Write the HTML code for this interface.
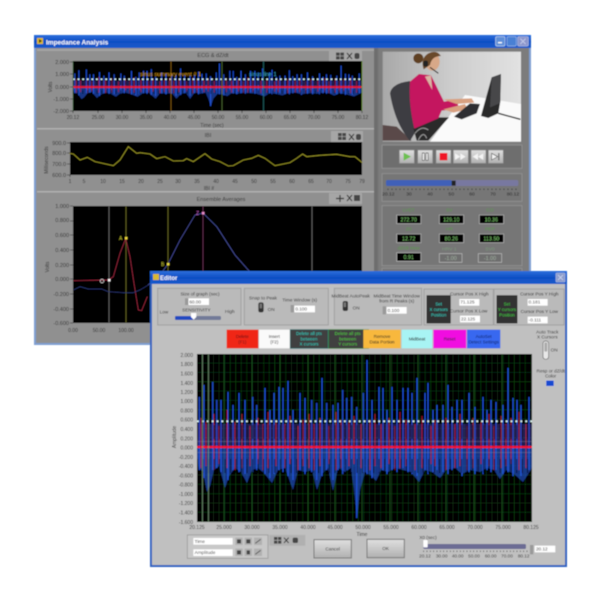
<!DOCTYPE html>
<html><head><meta charset="utf-8"><style>
html,body{margin:0;padding:0;background:#fff;width:600px;height:600px;overflow:hidden}
svg{display:block}
text{font-family:"Liberation Sans",sans-serif}
</style></head><body>
<svg width="600" height="600" viewBox="0 0 600 600" xmlns="http://www.w3.org/2000/svg">
<defs>
<filter id="b" x="-2%" y="-2%" width="104%" height="104%"><feGaussianBlur stdDeviation="0.4"/></filter>
<linearGradient id="tb" x1="0" y1="0" x2="0" y2="1"><stop offset="0" stop-color="#2d6fdc"/><stop offset=".5" stop-color="#0f4fc4"/><stop offset="1" stop-color="#1a5ccc"/></linearGradient>
<linearGradient id="wall" x1="0" y1="0" x2="1" y2="0"><stop offset="0" stop-color="#a8a8a8"/><stop offset=".5" stop-color="#cdcdcd"/><stop offset="1" stop-color="#e2e2e2"/></linearGradient>
<linearGradient id="btn" x1="0" y1="0" x2="0" y2="1"><stop offset="0" stop-color="#e0e0e0"/><stop offset="1" stop-color="#b0b0b0"/></linearGradient>
<g id="sp">
<path fill="none" stroke="#1f4fd8" stroke-width="1.200" d="M199.3 397V470M204 385V478M212.700 382V470M216.700 400V468M221 400V472M228 392V480M233 405V470M239 393V472M245 400V474M252.700 397V472M256.700 405V470M265 388V474M270 410V478M274 393V474M279 387V470M283 388V472M288 381V476M293 410V480M300 393V470M305 398V474M311.700 400V472M316.700 403V480M322 378V476M326.700 403V470M333 405V480M338 403V470M342.700 390V474M346.700 398V470M351.700 397V472M356.700 407V518M363.300 393V472M367 360V474M372 400V478M379 387V472M383 388V470M387 410V474M392 387V470M397 400V472M403 388V468M408 388V472M412 393V474M417 378V476M425 393V470M428 383V474M433 410V472M437 405V470M443 405V472M448 385V474M452 407V470M457 400V468M462 400V476M469 393V472M475 407V474M483 397V474M487 410V470M491 400V472M496 402V470M503 405V474M508 368V472M513 398V476M517 400V470M521 405V476M529 397V470"/>
<polygon fill="#2458dc" opacity=".6" points="197,446 532,446 532,468 523,482 514,474 506,470 500,479 494,470 487,468 480,472 470,470 462,474 455,468 446,470 440,478 432,472 425,470 419,482 411,472 403,470 395,468 388,472 381,470 376,481 372,476 365,472 360,490 357,518 354,490 351,468 345,472 338,468 333,491 328,468 322,474 317,490 312,470 305,472 298,470 293,490 285,468 278,470 272,483 264,473 258,468 252,470 247,483 241,472 235,468 229,476 225,488 219,466 214,470 210,486 207,492 203,472 199,468 197,460"/>
<rect x="197" y="424" width="335" height="24" fill="#4a3ab0" opacity=".45"/>
<path fill="none" stroke="#d0183c" stroke-width="1" opacity=".7" d="M201 418V468M206 422V466M214 414V470M219 426V464M227 410V468M235 422V470M242 414V468M250 426V466M258 418V464M263 424V470M268 412V468M276 420V466M285 424V468M290 416V464M298 426V470M303 420V466M309 414V468M314 424V470M320 418V466M329 426V464M336 412V470M341 420V468M349 422V466M354 416V464M361 424V468M370 420V470M375 414V466M381 424V468M389 418V464M395 426V470M400 412V468M406 420V466M415 424V470M422 416V468M431 426V464M435 420V466M446 418V470M455 424V468M460 414V466M467 426V470M473 418V468M481 422V464M489 414V466M494 426V470M501 416V468M506 424V466M511 418V464M519 412V470M526 424V468"/>
<path d="M197 466H532M197 432H532" stroke="#000" stroke-width="14" stroke-dasharray="1.200 4.300" opacity=".45" fill="none"/>
</g>
<pattern id="g1" x="197" y="354" width="5.57" height="9.33" patternUnits="userSpaceOnUse"><path d="M5.500 0V9.330M0 9.300H5.570" stroke="#17541f" stroke-width=".6" fill="none"/></pattern>
</defs>
<g filter="url(#b)">
<!-- main window -->
<rect x="34" y="35" width="497" height="310" fill="#7f9fd2"/>
<rect x="34" y="35" width="497" height="13" fill="url(#tb)" />
<rect x="36" y="48" width="493" height="295" fill="#909090"/>
<rect x="37" y="38" width="6" height="6" fill="#d8b830"/><path d="M39 39l3 2-3 2z" fill="#3a2a10"/>
<text x="46" y="44.500" font-size="6.500" font-weight="bold" fill="#fff">Impedance Analysis</text>
<g transform="translate(375 30) scale(.3333)">
<rect x="362" y="20" width="28" height="28" rx="4" fill="#5f8fd8" stroke="#c0d4f0" stroke-width="2"/>
<rect x="369" y="36" width="12" height="4" fill="#fff"/>
<rect x="396" y="20" width="28" height="28" rx="4" fill="#4a80d4" stroke="#9ab8e8" stroke-width="2"/>
<rect x="428" y="20" width="32" height="28" rx="4" fill="#8c96cc" stroke="#b0bce0" stroke-width="2"/>
<path d="M436 26l16 16M452 26l-16 16" stroke="#c0c8e8" stroke-width="3"/>
</g>
<rect x="37" y="49" width="339" height="2" fill="#a4a4a4"/>
<rect x="37" y="128" width="339" height="1.500" fill="#b0b0b0"/>
<rect x="37" y="191" width="339" height="1.500" fill="#b0b0b0"/>
<rect x="374" y="48" width="4" height="295" fill="#6e6e6e"/>
<rect x="378" y="48" width="151" height="295" fill="#7c7c7c"/>
<!-- Plot 1 -->
<text x="213" y="57" text-anchor="middle" font-size="5.500" fill="#333">ECG &amp; dZ/dt</text>
<rect x="329" y="50" width="33" height="11" fill="#a6a6a6"/>
<rect x="336" y="52.500" width="8" height="7" fill="#444"/><path d="M340 52v8M336 56h8" stroke="#ccc" stroke-width=".5"/>
<path d="M347 53l5 6M352 53l-5 6" stroke="#333" stroke-width="1"/>
<rect x="354.500" y="53" width="5" height="6" rx="2" fill="#444"/>
<rect x="73" y="61" width="289" height="50" fill="#000"/>
<use href="#sp" transform="translate(-97.150 -33.700) scale(.8627 .27)"/>
<path d="M73 87H362" stroke="#f0142c" stroke-width="1.800"/>
<path d="M73 79.300H362" stroke="#d8f8f4" stroke-width="1.500" stroke-dasharray="1.800 2.800"/>
<path d="M171 61V111" stroke="#9a6a10" stroke-width=".7"/><path d="M222 61V111" stroke="#5a7a3a" stroke-width=".7"/><path d="M263.500 61V111" stroke="#2a7a7a" stroke-width=".7"/><path d="M362 61V111" stroke="#6a9a30" stroke-width=".7"/><path d="M73 61V111" stroke="#3a6a3a" stroke-width=".6"/>
<text x="140" y="76" font-size="5.500" fill="#d89a18">sinus summary event # 1</text>
<text x="249" y="76" font-size="5.500" fill="#3aa8c8">sinus line 1</text>
<g font-size="5.500" fill="#333" text-anchor="end">
<text x="69" y="64">2.000</text><text x="69" y="76">1.000</text><text x="69" y="89">0.000</text><text x="69" y="101">-1.000</text><text x="69" y="113">-2.000</text>
</g>
<path d="M70 62h3M70 74h3M70 87h3M70 99h3M70 111h3M73 111v2M98 111v2M122 111v2M146 111v2M170 111v2M194 111v2M218 111v2M242 111v2M266 111v2M290 111v2M314 111v2M338 111v2M362 111v2" stroke="#222" stroke-width=".6"/>
<text x="52" y="87" font-size="5" fill="#333" transform="rotate(-90 52 87)" text-anchor="middle">Volts</text>
<g font-size="5" fill="#333" text-anchor="middle">
<text x="73" y="119">20.12</text><text x="98" y="119">25.00</text><text x="122" y="119">30.00</text><text x="146" y="119">35.00</text><text x="170" y="119">40.00</text><text x="194" y="119">45.00</text><text x="218" y="119">50.00</text><text x="242" y="119">55.00</text><text x="266" y="119">60.00</text><text x="290" y="119">65.00</text><text x="314" y="119">70.00</text><text x="338" y="119">75.00</text><text x="362" y="119">80.12</text>
<text x="212" y="127">Time (sec)</text>
</g>
<!-- Plot 2 -->
<text x="208" y="137" text-anchor="middle" font-size="5.500" fill="#333">IBI</text>
<rect x="331" y="131" width="32" height="11" fill="#a6a6a6"/>
<rect x="338" y="133" width="8" height="7" fill="#444"/><path d="M342 133v7M338 136.500h8" stroke="#ccc" stroke-width=".5"/>
<path d="M349 134l5 6M354 134l-5 6" stroke="#333" stroke-width="1"/>
<rect x="356" y="134" width="5" height="6" rx="2" fill="#444"/>
<rect x="70" y="142" width="292" height="33" fill="#000"/>
<g transform="translate(30 30) scale(.3333)">
<polyline fill="none" stroke="#a09c2a" stroke-width="2.500" points="118,370 130,372 150,390 172,382 195,395 250,407 270,390 295,350 320,370 330,368 360,372 380,386 405,380 430,393 460,392 470,386 490,395 525,371 545,387 570,395 595,408 610,407 640,390 665,385 685,376 705,385 735,407 780,398 800,385 818,372 830,380 870,376 920,373 960,380 975,380 997,398"/>
</g>
<g font-size="5.500" fill="#333" text-anchor="end">
<text x="66" y="145">900.0</text><text x="66" y="155">800.0</text><text x="66" y="166">700.0</text><text x="66" y="177">600.0</text>
</g>
<text x="48" y="160" font-size="5" fill="#333" transform="rotate(-90 48 160)" text-anchor="middle">Milliseconds</text>
<path d="M67 143h3M67 153h3M67 164h3M67 175h3M70 175v2" stroke="#222" stroke-width=".6"/>
<g font-size="5" fill="#333" text-anchor="middle">
<text x="70" y="183">1</text><text x="84" y="183">5</text><text x="103" y="183">10</text><text x="122" y="183">15</text><text x="141" y="183">20</text><text x="160" y="183">25</text><text x="178" y="183">30</text><text x="197" y="183">35</text><text x="216" y="183">40</text><text x="235" y="183">45</text><text x="254" y="183">50</text><text x="273" y="183">55</text><text x="292" y="183">60</text><text x="311" y="183">65</text><text x="329" y="183">70</text><text x="348" y="183">75</text><text x="362" y="183">79</text>
<text x="209" y="190">IBI #</text>
</g>
<!-- Plot 3 -->
<text x="221" y="201" text-anchor="middle" font-size="5.500" fill="#333">Ensemble Averages</text>
<rect x="329" y="193" width="33" height="11" fill="#a6a6a6"/>
<path d="M336 198.500h8M340 195v7" stroke="#333" stroke-width="1.200"/><path d="M347 195l5 6M352 195l-5 6" stroke="#333" stroke-width="1"/><rect x="354" y="195" width="6" height="6" fill="#444"/>
<rect x="73" y="206" width="289" height="117" fill="#000"/>
<path d="M109 206V323M312 206V323" stroke="#7a7a7a" stroke-width=".7"/>
<path d="M126 206V323M168 206V323" stroke="#7c7c34" stroke-width=".7"/>
<path d="M203 206V323" stroke="#6e3458" stroke-width=".8"/>
<g transform="translate(30 190) scale(.3333)" fill="none">
<polyline stroke="#a82c44" stroke-width="2" points="130,272 235,270 250,260 270,190 287,146 300,200 312,280 325,360 335,362 352,320"/>
<polyline stroke="#2c3a78" stroke-width="2" points="130,300 150,290 175,297 215,297 235,305 280,308 310,308 330,300 355,285"/>
</g>
<polyline fill="none" stroke="#4c54a4" stroke-width=".7" points="148,285 160,275 168,264 180,240 195,215 203,213 217,227 235,255 250,272"/>
<rect x="125" y="237" width="2.400" height="2.400" fill="#f4e040"/><rect x="167" y="263" width="2.400" height="2.400" fill="#f0e040"/><rect x="202" y="212" width="2.400" height="2.400" fill="#f090d0"/><rect x="108" y="279" width="2.400" height="2.400" fill="#fff"/>
<circle cx="102" cy="281" r="1.800" fill="none" stroke="#ddd" stroke-width=".6"/>
<text x="119" y="240" font-size="5" fill="#b8b830">A</text><text x="161" y="266" font-size="5" fill="#b8b830">B</text><text x="196" y="215" font-size="5" fill="#c060c0">Z</text>
<g font-size="5.500" fill="#333" text-anchor="end">
<text x="69" y="208">1.000</text><text x="69" y="222">0.800</text><text x="69" y="237">0.600</text><text x="69" y="252">0.400</text><text x="69" y="267">0.200</text><text x="69" y="281">0.000</text><text x="69" y="296">-0.200</text><text x="69" y="311">-0.400</text><text x="69" y="325">-0.600</text>
</g>
<path d="M70 206h3M70 221h3M70 235h3M70 250h3M70 265h3M70 279h3M70 294h3M70 309h3M70 323h3" stroke="#222" stroke-width=".6"/>
<text x="49" y="267" font-size="5" fill="#333" transform="rotate(-90 49 267)" text-anchor="middle">Volts</text>
<g font-size="5" fill="#333" text-anchor="middle"><text x="73" y="332">0.00</text><text x="99" y="332">50.00</text><text x="126" y="332">100.00</text></g>
<!-- right column -->
<g transform="translate(375 30) scale(.3333)">
<rect x="23" y="65" width="415" height="270" fill="url(#wall)"/>
<path d="M23 285L65 290L110 332H23Z" fill="#5a4a48"/>
<path d="M165 335L270 195L438 222V335Z" fill="#fafafa"/>
<path d="M45 190Q50 160 105 153L125 300L105 333Q60 280 45 190Z" fill="#3e3e42"/>
<path d="M115 295L190 262L222 262L160 332H125Z" fill="#2c2a2c"/>
<path d="M120 310Q140 285 160 300M130 330Q145 300 155 325" stroke="#999" stroke-width="3" fill="none"/>
<path d="M105 155L132 132L168 136L207 215L245 208L252 236L200 242L190 265L118 296Q100 220 105 155Z" fill="#c4185e"/>
<path d="M150 140L172 180L168 136Z" fill="#d9b4a4"/>
<path d="M205 208L290 205L298 218L245 222Z" fill="#d8a080"/>
<path d="M205 238L270 222L278 238L235 248Z" fill="#d8a080"/>
<ellipse cx="172" cy="95" rx="22" ry="27" fill="#d8a888"/>
<path d="M146 118Q135 85 160 70Q185 58 198 78Q170 78 165 105Z" fill="#6a4a2a"/>
<circle cx="130" cy="85" r="15" fill="#5e3f24"/>
<rect x="145" y="92" width="14" height="18" rx="6" fill="#222"/>
<path d="M165 112L190 130" stroke="#222" stroke-width="3"/>
<path d="M237 260L285 220L315 222L305 250L260 268Z" fill="#2e2e30"/>
<path d="M318 258L350 142L378 132L376 215L370 250L340 264Z" fill="#2a2a2c"/>
<path d="M350 142L378 132L374 220L345 232Z" fill="#47474a"/>
<path d="M370 250L436 268" stroke="#222" stroke-width="4"/>
<rect x="21" y="345" width="420" height="70" fill="#6e6e6e" stroke="#8f8f8f" stroke-width="3"/>
<g stroke="#888" stroke-width="2" fill="url(#btn)">
<rect x="73" y="360" width="45" height="40"/><rect x="128" y="360" width="45" height="40"/><rect x="183" y="360" width="45" height="40"/><rect x="235" y="360" width="45" height="40"/><rect x="288" y="360" width="45" height="40"/><rect x="340" y="360" width="45" height="40"/>
</g>
<path d="M86 368L108 380L86 392Z" fill="#6cc050"/>
<rect x="142" y="369" width="6" height="22" fill="#fff" stroke="#444" stroke-width="2"/><rect x="153" y="369" width="6" height="22" fill="#fff" stroke="#444" stroke-width="2"/>
<rect x="194" y="369" width="23" height="22" fill="#f01828"/>
<path d="M240 370L256 380L240 390ZM256 370L272 380L256 390Z" fill="#f4f4f4"/>
<path d="M325 370L309 380L325 390ZM309 370L293 380L309 390Z" fill="#f4f4f4"/>
<path d="M350 370L368 380L350 390Z" fill="#f4f4f4" stroke="#555" stroke-width="2"/><rect x="370" y="369" width="3" height="22" fill="#555"/>
<rect x="21" y="431" width="420" height="83" fill="#767676" stroke="#8f8f8f" stroke-width="3"/>
<rect x="33" y="450" width="397" height="18" rx="5" fill="#7878a0"/>
<rect x="33" y="450" width="197" height="18" rx="5" fill="#3f60b8"/>
<rect x="230" y="452" width="12" height="15" fill="#222"/>
<path d="M38 478H428" stroke="#222" stroke-width="4" stroke-dasharray="2 10"/>
<g font-size="15" fill="#222" text-anchor="middle"><text x="40" y="497">20.12</text><text x="102" y="497">30</text><text x="165" y="497">40</text><text x="229" y="497">50</text><text x="291" y="497">60</text><text x="354" y="497">70</text><text x="414" y="497">80.12</text></g>
<rect x="21" y="527" width="420" height="180" fill="#767676" stroke="#8f8f8f" stroke-width="3"/>
<g font-size="15" fill="#5a9a4a" text-anchor="middle">
<text x="101" y="544">LVET</text><text x="223" y="544">SV</text><text x="345" y="544">CO</text>
<text x="101" y="602">Z0</text><text x="223" y="602">HR</text><text x="345" y="602">PEP</text>
<text x="101" y="658">dZ/dt Max</text><text x="223" y="662" fill="#7a9a7a">HRV 1</text><text x="345" y="662" fill="#7a9a7a">SV0</text>
</g>
<g fill="#000" stroke="#b8b8b8" stroke-width="2">
<rect x="65" y="555" width="73" height="26"/><rect x="193" y="555" width="73" height="26"/><rect x="313" y="555" width="73" height="26"/>
<rect x="65" y="612" width="73" height="26"/><rect x="193" y="612" width="73" height="26"/><rect x="313" y="612" width="73" height="26"/>
<rect x="65" y="668" width="73" height="26"/>
<rect x="193" y="671" width="68" height="26" fill="#6e6e6e"/><rect x="310" y="671" width="70" height="26" fill="#6e6e6e"/>
</g>
<g font-size="16" fill="#80d070" text-anchor="middle">
<text x="101" y="574">272.70</text><text x="229" y="574">129.10</text><text x="349" y="574">10.36</text>
<text x="101" y="631">12.72</text><text x="229" y="631">80.26</text><text x="349" y="631">113.50</text>
<text x="101" y="687">0.91</text><text x="227" y="690" fill="#a0b0a0">-1.00</text><text x="345" y="690" fill="#a0b0a0">-1.00</text>
</g>
<rect x="21" y="715" width="420" height="14" fill="#767676" stroke="#8f8f8f" stroke-width="3"/>
</g>

<!-- Editor window -->
<rect x="150" y="271" width="417" height="296" fill="#2e62c0"/>
<rect x="150" y="271" width="417" height="13" fill="url(#tb)"/>
<rect x="152" y="284" width="413" height="281" fill="#c0c0c0"/>
<rect x="153" y="274" width="6" height="6" fill="#d8b830"/>
<text x="160" y="280" font-size="6" font-weight="bold" fill="#fff">Editor</text>
<rect x="556" y="273" width="9" height="9" rx="1" fill="#8c9ccc" stroke="#b8c4e4" stroke-width=".6"/><path d="M558 275l5 5M563 275l-5 5" stroke="#d0d8f0" stroke-width=".8"/>
<g transform="translate(145 265) scale(.3333)">
<rect x="38" y="70" width="250" height="110" fill="#bababa" stroke="#a0a0a0" stroke-width="3"/>
<rect x="298" y="70" width="252" height="110" fill="#bababa" stroke="#a0a0a0" stroke-width="3"/>
<text x="165" y="92" font-size="14" fill="#333" text-anchor="middle">Size of graph (sec)</text>
<rect x="130" y="100" width="62" height="20" fill="#fff"/><rect x="120" y="100" width="10" height="20" fill="#999"/>
<text x="133" y="115" font-size="14" fill="#333">60.00</text>
<text x="44" y="146" font-size="14" fill="#333">Low</text><text x="240" y="144" font-size="14" fill="#333">High</text>
<text x="154" y="140" font-size="14" fill="#333" text-anchor="middle">SENSITIVITY</text>
<rect x="90" y="153" width="138" height="12" rx="4" fill="#727a98"/><rect x="90" y="153" width="55" height="12" rx="4" fill="#2048c0"/>
<path d="M138 144H154V156L146 164L138 156Z" fill="#fff"/>
<text x="354" y="104" font-size="14" fill="#333" text-anchor="middle">Snap to Peak</text>
<rect x="340" y="112" width="16" height="30" rx="6" fill="#333"/><rect x="344" y="116" width="7" height="14" fill="#777"/>
<text x="368" y="138" font-size="14" fill="#333">ON</text>
<text x="464" y="110" font-size="14" fill="#333" text-anchor="middle">Time Window (s)</text>
<rect x="448" y="122" width="62" height="20" fill="#fff"/><rect x="437" y="120" width="10" height="22" fill="#999"/>
<text x="451" y="137" font-size="14" fill="#333">0.100</text>
<rect x="245" y="194" width="95" height="56" fill="#f02818"/>
<rect x="342" y="194" width="92" height="56" fill="#fafafa"/>
<rect x="436" y="194" width="113" height="56" fill="#404040" stroke="#1a6a6a" stroke-width="2"/>
<rect x="551" y="194" width="120" height="56" fill="#404040" stroke="#2a7a2a" stroke-width="2"/>
<g font-size="13.500" text-anchor="middle">
<text x="292" y="219" fill="#601010">Delete</text><text x="292" y="236" fill="#601010">(F1)</text>
<text x="388" y="219" fill="#333">Insert</text><text x="388" y="236" fill="#333">(F2)</text>
<text x="492" y="210" fill="#30d0c0">Delete all pts</text><text x="492" y="226" fill="#30d0c0">between</text><text x="492" y="242" fill="#30d0c0">X cursors</text>
<text x="608" y="210" fill="#50d040">Delete all pts</text><text x="608" y="226" fill="#50d040">between</text><text x="608" y="242" fill="#50d040">Y cursors</text>
</g>
</g>
<g transform="translate(340 265) scale(.3333)">
<rect x="-17" y="70" width="262" height="110" fill="#bababa" stroke="#a0a0a0" stroke-width="3" />
<rect x="252" y="72" width="208" height="108" fill="#bababa" stroke="#a0a0a0" stroke-width="3"/>
<rect x="462" y="72" width="210" height="108" fill="#bababa" stroke="#a0a0a0" stroke-width="3"/>
<text x="32" y="98" font-size="14" fill="#333" text-anchor="middle">MidBeat AutoPeak</text>
<rect x="8" y="108" width="16" height="30" rx="6" fill="#333"/><rect x="11" y="112" width="7" height="14" fill="#777"/>
<text x="38" y="134" font-size="14" fill="#333">ON</text>
<text x="170" y="97" font-size="14" fill="#333" text-anchor="middle">MidBeat Time Window</text>
<text x="170" y="112" font-size="14" fill="#333" text-anchor="middle">from R Peaks (s)</text>
<rect x="140" y="126" width="60" height="20" fill="#fff"/><rect x="128" y="124" width="10" height="24" fill="#999"/>
<text x="143" y="141" font-size="14" fill="#333">0.100</text>
<rect x="261" y="92" width="70" height="82" fill="#333" stroke="#111" stroke-width="2"/>
<g font-size="13" text-anchor="middle" fill="#30d8c8"><text x="296" y="122">Set</text><text x="296" y="138">X cursors</text><text x="296" y="154">Position</text></g>
<text x="388" y="92" font-size="14" fill="#333" text-anchor="middle">Cursor Pos X High</text>
<rect x="358" y="102" width="60" height="20" fill="#fff"/><text x="361" y="116" font-size="14" fill="#333">71.125</text>
<text x="386" y="142" font-size="14" fill="#333" text-anchor="middle">Cursor Pos X Low</text>
<rect x="360" y="152" width="60" height="20" fill="#fff"/><text x="363" y="167" font-size="14" fill="#333">22.125</text>
<rect x="471" y="92" width="60" height="82" fill="#333" stroke="#111" stroke-width="2"/>
<g font-size="13" text-anchor="middle" fill="#40d040"><text x="501" y="122">Set</text><text x="501" y="138">Y cursors</text><text x="501" y="154">Position</text></g>
<text x="598" y="92" font-size="14" fill="#333" text-anchor="middle">Cursor Pos Y High</text>
<rect x="563" y="102" width="60" height="20" fill="#fff"/><text x="566" y="116" font-size="14" fill="#333">0.181</text>
<text x="598" y="144" font-size="14" fill="#333" text-anchor="middle">Cursor Pos Y Low</text>
<rect x="563" y="155" width="60" height="20" fill="#fff"/><text x="566" y="170" font-size="14" fill="#333">-0.111</text>
<rect x="70" y="194" width="112" height="56" fill="#f8b83c"/>
<rect x="185" y="194" width="92" height="56" fill="#a8f4f4"/>
<rect x="280" y="194" width="99" height="56" fill="#f010e0"/>
<rect x="381" y="194" width="100" height="56" fill="#3868f0"/>
<g font-size="13.500" text-anchor="middle" fill="#222">
<text x="126" y="219">Remove</text><text x="126" y="236">Data Portion</text>
<text x="231" y="227">MidBeat</text><text x="329" y="227">Reset</text>
<text x="431" y="219" fill="#102060">AutoSet</text><text x="431" y="236" fill="#102060">Detect Settings</text>
</g>
<text x="622" y="206" font-size="14" fill="#333" text-anchor="middle">Auto Track</text>
<text x="622" y="220" font-size="14" fill="#333" text-anchor="middle">X Cursors</text>
<rect x="609" y="228" width="17" height="55" rx="8" fill="#e8e8e8" stroke="#666" stroke-width="2"/><rect x="613" y="232" width="9" height="28" rx="4" fill="#aaa"/>
<text x="632" y="260" font-size="14" fill="#333">ON</text>
<text x="632" y="322" font-size="14" fill="#333" text-anchor="middle">Resp or dZ/dt</text>
<text x="632" y="337" font-size="14" fill="#333" text-anchor="middle">Color</text>
<rect x="618" y="346" width="24" height="18" fill="#1848d0" stroke="#eee" stroke-width="1"/>
</g>
<!-- editor plot -->
<rect x="197" y="354" width="335" height="168" fill="#000"/>
<rect x="197" y="354" width="335" height="168" fill="url(#g1)"/>
<path d="M224 354V522M252 354V522M280 354V522M308 354V522M335 354V522M362 354V522M390 354V522M418 354V522M446 354V522M474 354V522M502 354V522" stroke="#1a5a22" stroke-width=".7"/>
<use href="#sp"/>
<path d="M197 447H532" stroke="#f4102c" stroke-width="2"/>
<path d="M197 421.300H532" stroke="#e0fbf8" stroke-width="1.800" stroke-dasharray="1.800 3.100"/>
<path d="M202.500 354V522M208.500 354V522" stroke="#7f9f7f" stroke-width=".7"/>
<path d="M197 441.500H532M197 452.500H532" stroke="#a0a0a0" stroke-width=".6" opacity=".6"/>
<g font-size="5" fill="#333" text-anchor="end">
<text x="193" y="357">2.000</text><text x="193" y="366">1.800</text><text x="193" y="375.500">1.600</text><text x="193" y="385">1.400</text><text x="193" y="394">1.200</text><text x="193" y="403">1.000</text><text x="193" y="412.500">0.800</text><text x="193" y="421.500">0.600</text><text x="193" y="431">0.400</text><text x="193" y="440.500">0.200</text><text x="193" y="449.500">0.000</text><text x="193" y="459">-0.200</text><text x="193" y="468">-0.400</text><text x="193" y="477.500">-0.600</text><text x="193" y="486.500">-0.800</text><text x="193" y="496">-1.000</text><text x="193" y="505">-1.200</text><text x="193" y="514.500">-1.400</text><text x="193" y="524">-1.600</text>
</g>
<text x="176" y="437" font-size="5" fill="#333" transform="rotate(-90 176 437)" text-anchor="middle">Amplitude</text>
<g font-size="5" fill="#333" text-anchor="middle">
<text x="197" y="529">20.125</text><text x="224" y="529">25.000</text><text x="252" y="529">30.000</text><text x="280" y="529">35.000</text><text x="308" y="529">40.000</text><text x="335" y="529">45.000</text><text x="363" y="529">50.000</text><text x="391" y="529">55.000</text><text x="419" y="529">60.000</text><text x="447" y="529">65.000</text><text x="475" y="529">70.000</text><text x="503" y="529">75.000</text><text x="531" y="529">80.125</text>
<text x="362" y="536">Time</text>
</g>
<!-- bottom controls -->
<g transform="translate(150 350) scale(.3333)">
<rect x="112" y="555" width="242" height="70" fill="#c8c8c8" stroke="#8f8f8f" stroke-width="2"/>
<rect x="130" y="564" width="118" height="20" fill="#fff"/><rect x="130" y="598" width="118" height="20" fill="#fff"/>
<text x="134" y="579" font-size="14" fill="#333">Time</text><text x="134" y="612" font-size="14" fill="#333">Amplitude</text>
<rect x="256" y="563" width="22" height="22" fill="#b0b0b0"/><rect x="284" y="563" width="22" height="22" fill="#b0b0b0"/><rect x="312" y="563" width="24" height="22" fill="#b0b0b0"/>
<rect x="256" y="596" width="22" height="22" fill="#b0b0b0"/><rect x="284" y="596" width="22" height="22" fill="#b0b0b0"/><rect x="312" y="596" width="24" height="22" fill="#b0b0b0"/>
<path d="M261 568h12v12h-12zM289 568h12v12h-12zM261 601h12v12h-12zM290 601h10v12h-10z" fill="#444"/>
<path d="M316 580l16-12M316 613l16-12" stroke="#333" stroke-width="2"/>
<rect x="358" y="555" width="108" height="32" fill="#b0b0b0"/>
<rect x="372" y="561" width="22" height="20" fill="#444"/><path d="M383 561v20M372 571h22" stroke="#ccc" stroke-width="1.500"/>
<path d="M402 563l14 16M416 563l-14 16" stroke="#333" stroke-width="3"/><rect x="428" y="563" width="16" height="16" rx="5" fill="#444"/>
<rect x="492" y="569" width="112" height="55" fill="url(#btn)" stroke="#777" stroke-width="3"/>
<text x="548" y="601" font-size="14" fill="#333" text-anchor="middle">Cancel</text>
</g>
<g transform="translate(360 480) scale(.3333)">
<rect x="21" y="178" width="112" height="55" fill="url(#btn)" stroke="#777" stroke-width="3"/>
<text x="77" y="210" font-size="14" fill="#333" text-anchor="middle">OK</text>
<text x="204" y="177" font-size="14" fill="#333" text-anchor="middle">X0 (sec)</text>
<rect x="190" y="192" width="308" height="15" rx="4" fill="#6c6c94"/>
<rect x="190" y="180" width="13" height="22" rx="2" fill="#fff"/>
<path d="M190 214H510" stroke="#333" stroke-width="4" stroke-dasharray="2 8"/>
<g font-size="14" fill="#333" text-anchor="middle"><text x="195" y="232">20.12</text><text x="245" y="232">30.00</text><text x="293" y="232">40.00</text><text x="342" y="232">50.00</text><text x="392" y="232">60.00</text><text x="441" y="232">70.00</text><text x="491" y="232">80.12</text></g>
<rect x="510" y="195" width="10" height="28" fill="#999"/>
<rect x="524" y="197" width="62" height="20" fill="#fff"/><text x="528" y="212" font-size="14" fill="#333">20.12</text>
</g>
</g>
</svg>
</body></html>
